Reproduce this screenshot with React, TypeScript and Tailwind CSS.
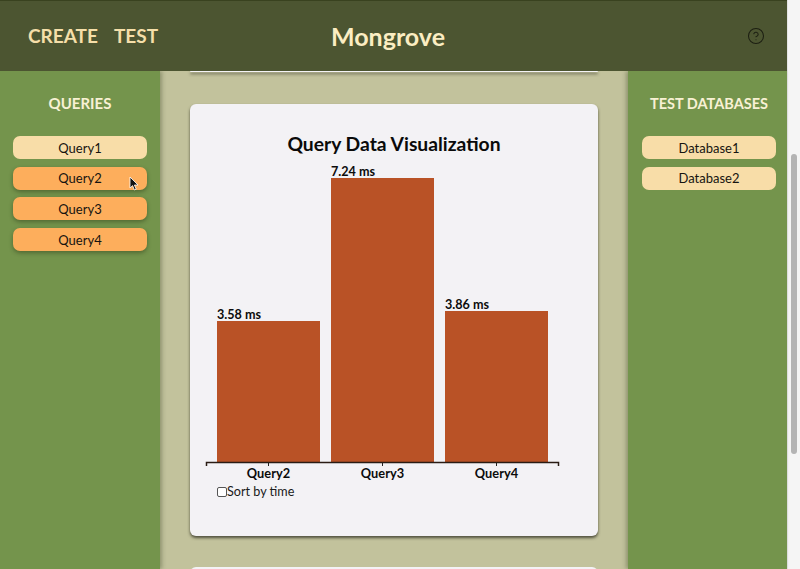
import { CircleHelp } from 'lucide-react';

const queries = [
  { name: 'Query1', active: false },
  { name: 'Query2', active: true },
  { name: 'Query3', active: true },
  { name: 'Query4', active: true },
];

const bars = [
  { name: 'Query2', label: '3.58 ms', x: 217, top: 321 },
  { name: 'Query3', label: '7.24 ms', x: 331, top: 178 },
  { name: 'Query4', label: '3.86 ms', x: 445, top: 311 },
];

function SideButton({ name, active }: { name: string; active?: boolean }) {
  return (
    <div
      className={`h-[23px] pt-[1px] rounded-[7px] flex items-center justify-center text-[13px] leading-none text-[#161410] ${
        active ? 'bg-[#fdae5c] shadow-[0_2px_4px_rgba(40,50,20,0.45)]' : 'bg-[#f8dda8]'
      }`}
    >
      {name}
    </div>
  );
}

function Chart() {
  return (
    <svg width="408" height="432" viewBox="190 104 408 432" className="block">
      {bars.map((b) => (
        <g key={b.name}>
          <rect x={b.x} y={b.top} width="103" height={462 - b.top} fill="#b95226" />
          <text x={b.x} y={b.top - 2.5} fontSize="12.6" fontWeight="700" fill="#0c0c0c" fontFamily="Lato, sans-serif">
            {b.label}
          </text>
          <line x1={b.x + 51.5} x2={b.x + 51.5} y1="462" y2="466" stroke="#222" />
          <text x={b.x + 51.5} y="478" fontSize="12.8" fontWeight="700" fill="#0c0c0c" textAnchor="middle" fontFamily="Lato, sans-serif">
            {b.name}
          </text>
        </g>
      ))}
      <path d="M206.5 466V462.5H558.5V466" fill="none" stroke="#2a1c14" strokeWidth="1.5" />
    </svg>
  );
}

export default function App() {
  return (
    <div className="relative w-[800px] h-[569px] overflow-hidden flex bg-[#f4f4f4] font-[Lato,sans-serif]">
      <div className="w-[787px] flex flex-col">
        <header className="relative z-10 h-[71px] shrink-0 bg-[#4c5531] border-t border-[#39421f] flex items-center justify-between pl-[28px] pr-[22px]">
          <nav className="flex gap-[16px] mb-[1px] text-[19px] font-bold text-[#f5dfa9] leading-none">
            <span>CREATE</span>
            <span>TEST</span>
          </nav>
          <h1 className="absolute left-[331px] top-[19px] text-[25px] leading-[32px] font-bold text-[#fbedc2]">Mongrove</h1>
          <CircleHelp className="w-[18px] h-[18px] mb-[1px] text-[#1c1f12]" strokeWidth={1.4} />
        </header>

        <div className="flex flex-1 min-h-0">
          <aside className="relative z-[5] w-[160px] shrink-0 bg-[#74944c] shadow-[2px_0_4px_rgba(50,60,30,0.35)] px-[13px]">
            <h2 className="mt-[23px] mb-[24px] text-center text-[15px] leading-[18px] font-bold text-[#f8f1d4]">QUERIES</h2>
            <div className="flex flex-col gap-[7.7px] w-[134px]">
              {queries.map((q) => (
                <SideButton key={q.name} name={q.name} active={q.active} />
              ))}
            </div>
          </aside>

          <main className="flex-1 bg-[#c2c29c] flex flex-col items-center gap-[32px] overflow-hidden">
            <div className="w-[408px] h-[1px] shrink-0 bg-[#f4f3f5] shadow-[0_2px_3px_rgba(30,30,20,0.85)] rounded-b" />
            <section className="relative w-[408px] h-[432px] shrink-0 bg-[#f3f2f5] rounded-[6px] shadow-[0_2px_3px_rgba(30,30,20,0.7)]">
              <Chart />
              <h2 className="absolute inset-x-0 top-[27px] text-center text-[19.3px] leading-[26px] font-bold text-[#0a0a0a]">
                Query Data Visualization
              </h2>
              <label className="absolute left-[27px] top-[380px] flex items-center text-[12.6px] leading-[16px] text-[#1a1a1a]">
                <span className="w-[10px] h-[10px] rounded-[2px] border border-[#555] bg-white" />
                Sort by time
              </label>
            </section>
            <div className="w-[408px] h-[10px] shrink-0 mt-[-1px] bg-[#f3f2f5] rounded-t-[6px]" />
          </main>

          <aside className="relative z-[5] w-[159px] shrink-0 bg-[#74944c] shadow-[-2px_0_4px_rgba(50,60,30,0.35)] pl-[14px]">
            <h2 className="mt-[24px] mb-[23px] w-[134px] text-center text-[14.5px] leading-[18px] font-bold text-[#f8f1d4] whitespace-nowrap">TEST DATABASES</h2>
            <div className="flex flex-col gap-[7.7px] w-[134px]">
              <SideButton name="Database1" />
              <SideButton name="Database2" />
            </div>
          </aside>
        </div>
      </div>

      <div className="w-[13px] shrink-0 pt-[154px] pl-[3px] bg-[#f5f5f5] border-l border-[#e4e4e4]">
        <div className="w-[6px] h-[300px] rounded-full bg-[#b4b4b4]" />
      </div>

      <svg className="absolute z-20 left-[129px] top-[176px]" width="10" height="15" viewBox="0 0 10 15">
        <path d="M1 1v11l2.6-2.4L5.4 14l1.8-.8-1.8-4.2H9z" fill="#111" stroke="#fff" strokeWidth="0.8" />
      </svg>
    </div>
  );
}
